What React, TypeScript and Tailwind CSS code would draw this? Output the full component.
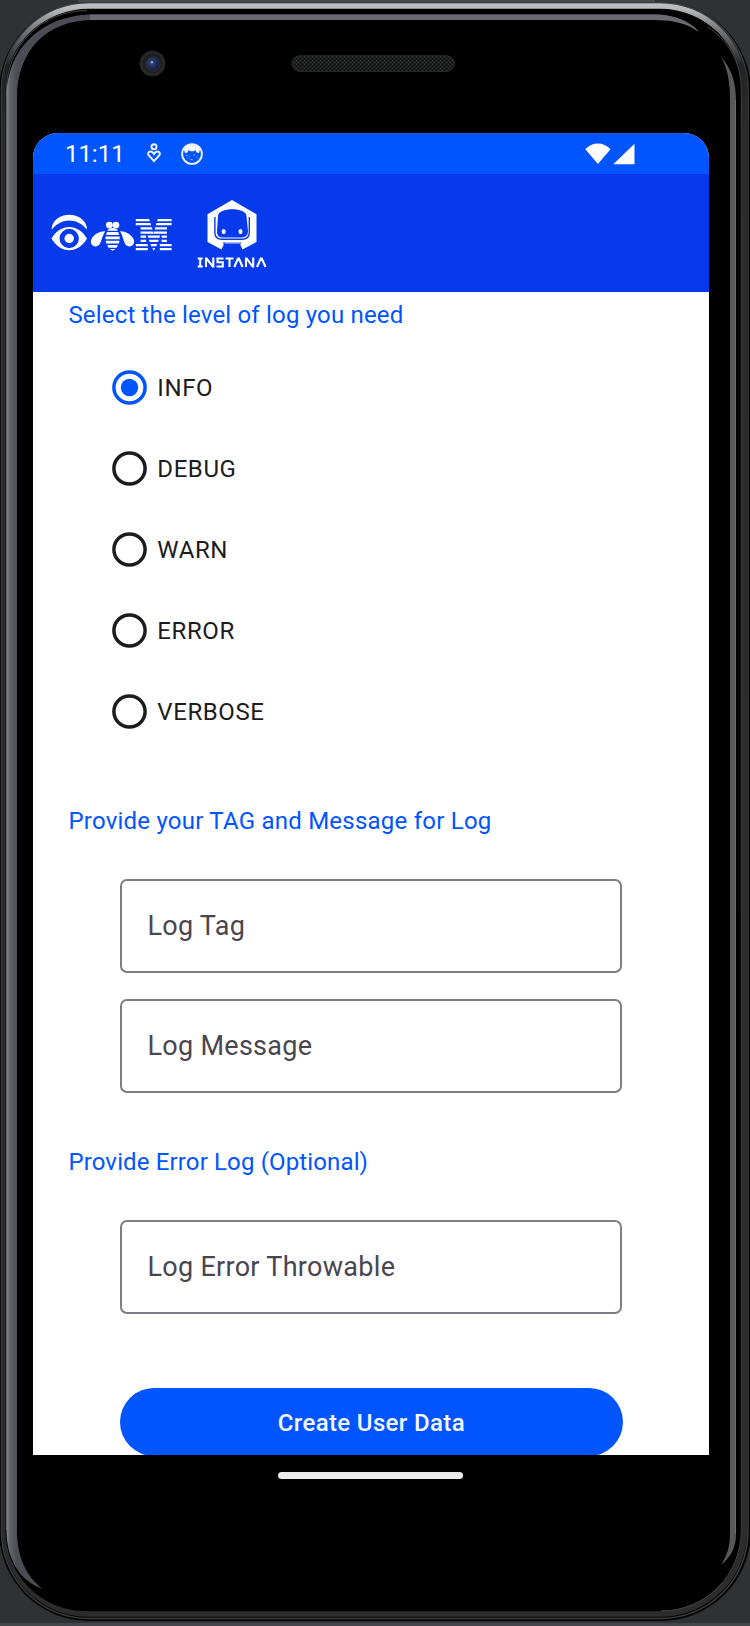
import React from "react";

function PhoneFrame() {
  return (
    <svg className="absolute inset-0" width="750" height="1626" viewBox="0 0 750 1626" fill="none">
      <defs>
        <linearGradient id="rim" x1="0" y1="0" x2="0" y2="1626" gradientUnits="userSpaceOnUse">
          <stop offset="0" stopColor="#c4c6c8" />
          <stop offset="0.006" stopColor="#b4b6b8" />
          <stop offset="0.018" stopColor="#77797b" />
          <stop offset="0.04" stopColor="#222324" />
          <stop offset="0.08" stopColor="#2b2b2c" />
          <stop offset="1" stopColor="#2c2c2d" />
        </linearGradient>
        <linearGradient id="leftBand" x1="6" y1="0" x2="17" y2="0" gradientUnits="userSpaceOnUse">
          <stop offset="0" stopColor="#8b8c90" />
          <stop offset="0.35" stopColor="#62646a" />
          <stop offset="1" stopColor="#4b4d54" />
        </linearGradient>
        <pattern id="mesh" width="4" height="4" patternUnits="userSpaceOnUse">
          <rect width="4" height="4" fill="#1c1d1d" />
          <path d="M0 0h1v1H0zM2 2h1v1H2z" fill="#353737" />
          <path d="M2 0h1v1H2zM0 2h1v1H0z" fill="#0b0b0b" />
        </pattern>
        <radialGradient id="lens" cx="0.42" cy="0.4" r="0.6">
          <stop offset="0" stopColor="#7184bd" />
          <stop offset="0.25" stopColor="#2c3b70" />
          <stop offset="1" stopColor="#111a38" />
        </radialGradient>
      </defs>
      <rect width="750" height="1626" fill="#303133" />
      <path d="M0 1624.5H750" stroke="#45464a" strokeWidth="3" />
      <path d="M78 1H655" stroke="#4b4b4b" strokeWidth="2" />
      <rect x="-1" y="2" width="752" height="1619" rx="90" fill="#050505" />
      <rect x="1.5" y="2.5" width="746.5" height="1616" rx="87" stroke="#3c3c3c" strokeWidth="1.5" />
      <rect x="4.5" y="6" width="740" height="1608" rx="84" stroke="url(#rim)" strokeWidth="5.5" />
      <rect x="5.5" y="10" width="736" height="1601" rx="80" fill="#000" />
      <path d="M6.3 1530V91C6.3 46 42 10.5 87 10.5M741.3 91V1530C741.3 1575 706 1611 661 1611M741.3 91C741.3 60 727 40 708 27" stroke="#555" strokeWidth="0.8" />
      <path
        d="M6.5 98C6.5 48 43 14.5 93 14.5H655C674 14.5 690 21 699 32C687 23 673 20 655 20H93C47 20 17 50 17 98V1530C17 1556 26 1577 43 1589C19 1581 6.5 1558 6.5 1530Z"
        fill="url(#leftBand)"
      />
      <path d="M90 14.5H655C674 14.5 690 21 699 32C687 23 673 20 655 20H90Z" fill="#6c6970" />
      <path d="M721 57C732 69 736 83 736 101V1534C736 1547 731 1557 721 1565C728 1554 730 1545 730 1533V100C730 83 728 69 721 57Z" fill="#58585b" />
      <path d="M735.5 100V1533" stroke="#77777a" strokeWidth="0.7" />
      <circle cx="152.5" cy="63.5" r="13" fill="#1d1e20" />
      <circle cx="152.5" cy="63.5" r="11" stroke="#28292b" strokeWidth="2" />
      <circle cx="153" cy="64" r="7" fill="url(#lens)" stroke="#33353d" strokeWidth="0.8" />
      <circle cx="152" cy="62" r="1.1" fill="#9aa8d4" />
      <rect x="292" y="55.8" width="162.5" height="15.6" rx="7.8" fill="url(#mesh)" stroke="#303131" strokeWidth="0.8" />
    </svg>
  );
}

function StatusBar() {
  return (
    <div className="flex h-[41px] shrink-0 items-center bg-[#0055ff] pl-[31.5px] text-white">
      <span className="w-[82px] pt-px text-[24px] leading-none">11:11</span>
      <svg className="-mt-px" width="14" height="20" viewBox="0 0 14 20" fill="none" stroke="#eef3ff" strokeWidth="2">
        <circle cx="7" cy="3.8" r="2.5" />
        <path d="M7 18.1L2 12.7C.2 10.5 1.4 8.6 3.6 8.6C5.3 8.6 6.2 9.7 7 10.9C7.8 9.7 8.7 8.6 10.4 8.6C12.6 8.6 13.8 10.5 12 12.7Z" />
      </svg>
      <svg className="ml-[20.5px]" width="22" height="22" viewBox="0 0 22 22" fill="none">
        <circle cx="11" cy="11" r="9.9" stroke="#e8f0ff" strokeWidth="1.9" />
        <path d="M3 6.5C6 0 16 0 19 6.5L18 10L15.5 9.5L14.5 7L12.6 8.2H9.4L7.5 7L6.5 9.5L4 10Z" fill="#fff" />
        <path d="M5 12.5h1.5M8 13.5h1M12.5 12h1.5M15.5 14h1M9.5 16.5h2M6.5 15.5h1" stroke="#8db3ff" strokeWidth="1" />
      </svg>
      <svg className="ml-[381.5px]" width="50" height="22" viewBox="0 0 50 22" fill="#fff">
        <path d="M0.3 6.2C7 -1.3 18.5 -1.3 25.5 6.2L12.9 21Z" />
        <path d="M49.5 .7V21.3H28.3Z" />
      </svg>
    </div>
  );
}

function Header() {
  return (
    <div className="flex h-[118px] shrink-0 bg-[#063aea] pl-[17.5px]">
      <svg className="mt-[40px]" width="122" height="38" viewBox="0 0 122 38" fill="#fff">
        <path d="M.8 12.8C5 -3.2 31.5 -3.2 35.8 12.8V15.5C26 3.4 10.6 3.4 .8 15.5Z" />
        <path fillRule="evenodd" d="M.5 24.5C9 9 27.5 9 36 24.5C27.5 40 9 40 .5 24.5ZM18.2 14.8A9.7 9.7 0 1 0 18.2 34.2A9.7 9.7 0 1 0 18.2 14.8Z" />
        <circle cx="18.2" cy="24.5" r="4.7" />
        <circle cx="58.3" cy="11.1" r="3.4" />
        <circle cx="64.9" cy="11.1" r="3.4" />
        <path d="M56.2 16.7C58 13 65 13 67 16.7Z" />
        <path d="M54.3 17.2C49 16.8 43.5 20 41 24C38 29 41.5 32.8 45 32.4C51 31.6 49.5 24 54.3 17.2Z" />
        <path d="M69 17.2C74 16.8 79.5 20 82 24C85 29 81.5 32.8 78 32.4C72 31.6 73.5 24 69 17.2Z" />
        <path d="M56 18H67.2L68.3 20.9H55ZM54.5 22.6H68.7V25.2H54.5ZM54.7 26.8H68.5L67.9 29.6H55.3ZM56.3 31.1H66.9L65.7 33.7H57.5ZM58.8 34.9H64.5L61.6 36.8Z" />
        <path d="M84.8 5H98.1L98.9 7.2H84.8ZM106.9 5H120.6V7.2H106.1ZM84.8 9.1H99.5L100.2 11.3H84.8ZM105.5 9.1H120.6V11.3H104.8ZM89.6 13.3H100.8L101.5 15.5H89.6ZM104.3 13.3H115.9V15.5H103.6ZM89.6 17.5H102.1L102.6 19.7H89.6ZM103.1 17.5H115.9V19.7H102.6ZM89.6 21.6H95.1V23.8H89.6ZM96.6 21.6H109.1L108.5 23.8H97.2ZM110.6 21.6H115.9V23.8H110.6ZM89.6 25.8H95.1V28H89.6ZM97.9 25.8H107.8L107.1 28H98.6ZM110.6 25.8H115.9V28H110.6ZM84.8 30H96.8V32.2H84.8ZM99.5 30H106.1L105.4 32.2H100.2ZM108.8 30H120.6V32.2H108.8ZM84.8 34.1H96.8V36.3H84.8ZM101.4 34.1H104.2L102.8 37ZM108.8 34.1H120.6V36.3H108.8Z" />
      </svg>
      <svg className="ml-[24px] mt-[25px]" width="70" height="70" viewBox="0 0 70 70" fill="none">
        <path d="M35 1L59.5 15.2V43L45.5 50.5L43 45H27L24.5 50.5L10.5 43V15.2Z" fill="#fff" />
        <path d="M21 17C21 8 49.5 8 49.5 17L51 32C51 36.5 48.5 38.5 44 38.5H26C21.5 38.5 20 36.5 20 32Z" fill="#063aea" />
        <path d="M17.9 18V33.5C17.9 37.7 20.5 40.3 25 40.3H45C49.5 40.3 52.3 37.7 52.3 33.5V18" stroke="#063aea" strokeWidth="1.4" />
        <path d="M26 43.5H44L41 51H29Z" fill="#063aea" />
        <path d="M28 44H43" stroke="#dce5ff" strokeWidth="0.9" />
        <ellipse cx="26.7" cy="32.6" rx="2" ry="2.6" fill="#fff" />
        <ellipse cx="43.5" cy="32.6" rx="2" ry="2.6" fill="#fff" />
        <g stroke="#fff" strokeWidth="2.1">
          <path d="M.7 59.5H5.7M3.2 59V68M.7 67.5H5.7M9 68V59.5H9.7L15.7 67.5H16.3V58.5M26.5 59.5H20.5V63.2H25.8V67.5H19.5M28.5 59.5H36.5M32.5 59V68M37.3 68L41 59.5H42L45.5 68M49 68V59.5H49.7L55.5 67.5H56.2V58.5M60 68L63.8 59.5H64.8L68.5 68" />
        </g>
      </svg>
    </div>
  );
}

function Radio({ label, checked = false }: { label: string; checked?: boolean }) {
  return (
    <label className="flex h-[81px] items-center">
      <svg width="35" height="35" viewBox="0 0 35 35" fill="none">
        <circle cx="17.5" cy="17.5" r="15.6" stroke={checked ? "#0055ff" : "#1d1b20"} strokeWidth="3.5" />
        {checked && <circle cx="17.5" cy="17.5" r="8.7" fill="#0055ff" />}
      </svg>
      <span className="ml-[10px] pt-[2px] text-[24px] leading-none tracking-[0.6px] text-[#1d1b20]">{label}</span>
    </label>
  );
}

function Title({ children, tracking = "tracking-[0.18px]" }: { children: string; tracking?: string }) {
  return <h2 className={`h-[28px] pl-[35px] text-[24px] leading-[28px] text-[#0055ff] ${tracking}`}>{children}</h2>;
}

function Field({ label }: { label: string }) {
  return (
    <div className="ml-[86.5px] flex h-[94px] w-[502.5px] items-center rounded-[7px] border-2 border-[#817d86] pl-[25.5px] pt-[2px] text-[27px] leading-none tracking-[0.3px] text-[#49454f]">
      {label}
    </div>
  );
}

export default function App() {
  return (
    <div className="relative h-[1626px] w-[750px] overflow-hidden font-['Roboto',sans-serif]">
      <PhoneFrame />
      <div className="relative flex flex-col pl-[33.4px] pt-[133.4px]">
        <main className="flex h-[1321.6px] w-[675.3px] flex-col overflow-hidden rounded-t-[25px] bg-white">
          <StatusBar />
          <Header />
          <div className="pt-[8.6px]">
            <Title>Select the level of log you need</Title>
            <div className="pl-[78.9px] pt-[18px]">
              <Radio label="INFO" checked />
              <Radio label="DEBUG" />
              <Radio label="WARN" />
              <Radio label="ERROR" />
              <Radio label="VERBOSE" />
            </div>
            <div className="pt-[55px]">
              <Title tracking="tracking-[0.23px]">Provide your TAG and Message for Log</Title>
            </div>
            <div className="flex flex-col gap-[26px] pt-[44px]">
              <Field label="Log Tag" />
              <Field label="Log Message" />
            </div>
            <div className="pt-[55px]">
              <Title tracking="tracking-[0.14px]">Provide Error Log (Optional)</Title>
            </div>
            <div className="pt-[44px]">
              <Field label="Log Error Throwable" />
            </div>
            <button className="ml-[86.5px] mt-[74px] block h-[68px] w-[503px] rounded-full bg-[#0055ff] pt-[3px] text-[24px] font-medium leading-none tracking-[0.36px] text-[#f5f7ff]">
              Create User Data
            </button>
          </div>
        </main>
        <div className="ml-[244.6px] mt-[17px] h-[7px] w-[185px] rounded-full bg-[#ebebeb]" />
      </div>
    </div>
  );
}
